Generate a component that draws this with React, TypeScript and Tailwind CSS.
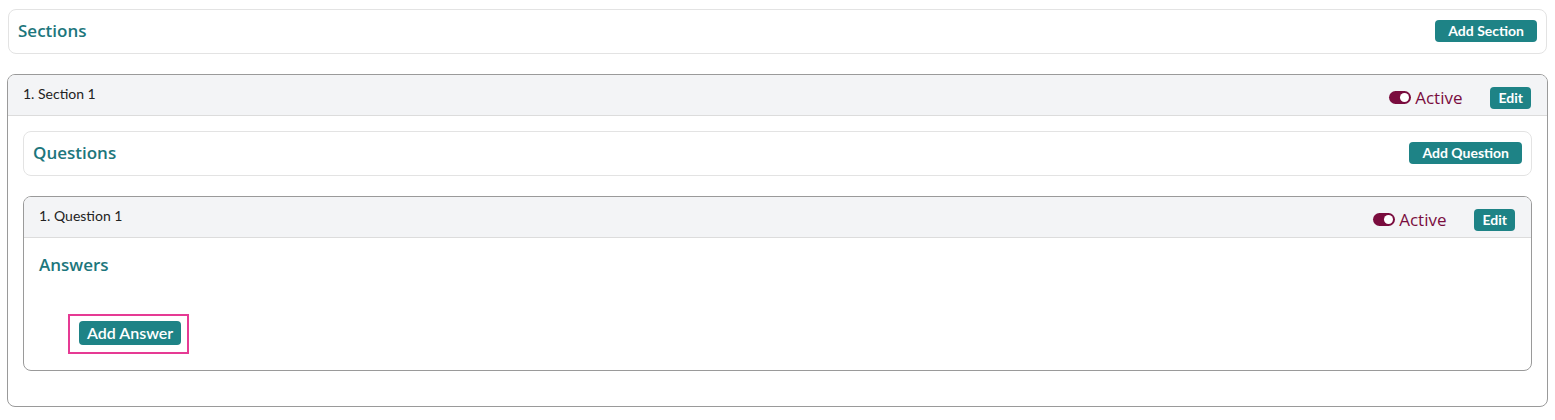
const font = { fontFamily: "Lato, 'Noto Sans', sans-serif" };
const wide = "font-['Open_Sans',sans-serif]";

function Toggle() {
  return (
    <span className="relative inline-block h-[13px] w-[22px] rounded-full bg-[#7a0c3e]">
      <span className="absolute right-[2px] top-[2px] h-[9px] w-[9px] rounded-full bg-white" />
    </span>
  );
}

function TealButton({ children, className = "" }: { children: React.ReactNode; className?: string }) {
  return (
    <button
      className={`rounded-[4px] bg-[#1e8386] text-[14px] font-bold leading-[22px] text-white ${className}`}
    >
      {children}
    </button>
  );
}

function TitleBar({ title, action }: { title: string; action: string }) {
  return (
    <div className="flex h-[45px] items-center justify-between rounded-lg border border-[#e3e3e3] bg-white px-[9px]">
      <span className={`${wide} pb-[2px] text-[17px] font-semibold text-[#1c767c]`}>{title}</span>
      <TealButton className="mb-[2px] px-[13px]">{action}</TealButton>
    </div>
  );
}

function CardHeader({ label }: { label: string }) {
  return (
    <div className="flex h-[41px] items-center justify-between border-b border-[#dcdcdc] bg-[#f3f4f6] pl-[15px] pr-[16px]">
      <span className="pb-[3px] text-[14px] text-[#222]">{label}</span>
      <div className="flex items-center pt-[5px]">
        <Toggle />
        <span className={`${wide} ml-[4px] text-[17px] leading-[20px] text-[#7a0c3e]`}>Active</span>
        <TealButton className="ml-[28px] px-[8px]">Edit</TealButton>
      </div>
    </div>
  );
}

export default function App() {
  return (
    <div className="bg-white px-[8px] pt-[9px]" style={font}>
      <TitleBar title="Sections" action="Add Section" />
      <div className="mx-[-1px] mt-[20px] overflow-hidden rounded-lg border border-[#9a9a9a]">
        <CardHeader label="1. Section 1" />
        <div className="px-[15px] pb-[35px] pt-[15px]">
          <TitleBar title="Questions" action="Add Question" />
          <div className="mt-[20px] overflow-hidden rounded-lg border border-[#9a9a9a]">
            <CardHeader label="1. Question 1" />
            <div className="px-[15px] pb-[16px] pt-[14px]">
              <div className={`${wide} text-[17px] font-semibold text-[#1c767c]`}>Answers</div>
              <div className="ml-[29px] mt-[36px] flex w-fit border-2 border-[#e63a94] pb-[7px] pl-[9px] pr-[6px] pt-[5px]">
                <TealButton className="px-[8px] text-[16px] font-semibold leading-[24px]">Add Answer</TealButton>
              </div>
            </div>
          </div>
        </div>
      </div>
    </div>
  );
}
